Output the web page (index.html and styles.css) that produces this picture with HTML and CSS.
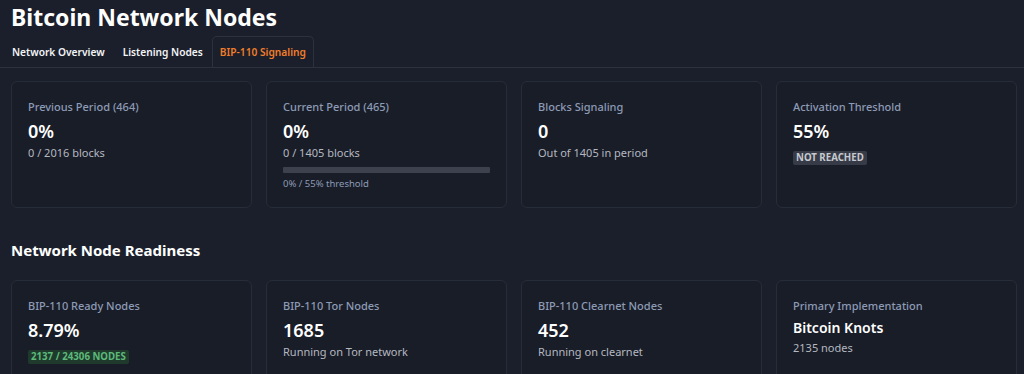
FILE: index.html
```html
<!DOCTYPE html>
<html lang="en">
<head>
  <meta charset="UTF-8" />
  <meta name="viewport" content="width=device-width, initial-scale=1.0"/>
  <title>Bitcoin Network Nodes</title>
  <link rel="stylesheet" href="styles.css">
</head>
<body>
  <div class="page">
    <h1>Bitcoin Network Nodes</h1>

    <nav class="tabs">
      <a class="tab">Network Overview</a>
      <a class="tab">Listening Nodes</a>
      <a class="tab active">BIP-110 Signaling</a>
    </nav>

    <div class="grid">
      <div class="card">
        <div class="label">Previous Period (464)</div>
        <div class="value">0%</div>
        <div class="sub">0 / 2016 blocks</div>
      </div>
      <div class="card">
        <div class="label">Current Period (465)</div>
        <div class="value">0%</div>
        <div class="sub">0 / 1405 blocks</div>
        <div class="progress"><div class="progress-fill" style="width: 0%"></div></div>
        <div class="note">0% / 55% threshold</div>
      </div>
      <div class="card">
        <div class="label">Blocks Signaling</div>
        <div class="value">0</div>
        <div class="sub">Out of 1405 in period</div>
      </div>
      <div class="card">
        <div class="label">Activation Threshold</div>
        <div class="value">55%</div>
        <span class="badge">NOT REACHED</span>
      </div>
    </div>

    <h2>Network Node Readiness</h2>

    <div class="grid readiness">
      <div class="card">
        <div class="label">BIP-110 Ready Nodes</div>
        <div class="value">8.79%</div>
        <span class="badge green">2137 / 24306 NODES</span>
      </div>
      <div class="card">
        <div class="label">BIP-110 Tor Nodes</div>
        <div class="value">1685</div>
        <div class="sub">Running on Tor network</div>
      </div>
      <div class="card">
        <div class="label">BIP-110 Clearnet Nodes</div>
        <div class="value">452</div>
        <div class="sub">Running on clearnet</div>
      </div>
      <div class="card">
        <div class="label">Primary Implementation</div>
        <div class="value small">Bitcoin Knots</div>
        <div class="sub">2135 nodes</div>
      </div>
    </div>
  </div>
</body>
</html>
```

FILE: styles.css
```css
* {
  box-sizing: border-box;
  font-family: 'Noto Sans', 'Open Sans', sans-serif;
}

body {
  margin: 0;
  background: #1b1f2b;
  color: #e6e8ec;
}

.page {
  padding: 0 7px 0 11px;
}

h1 {
  margin: 0;
  padding-top: 2px;
  font-size: 23px;
  font-weight: 700;
  line-height: 30px;
  color: #ffffff;
}

.tabs {
  display: flex;
  margin: 4px -7px 0 -11px;
  padding: 0 3px;
  border-bottom: 1px solid #2c3140;
}

.tab {
  padding: 6px 8px;
  font-size: 10.2px;
  font-weight: 600;
  line-height: 18px;
  color: #f2f4f7;
  border: 1px solid transparent;
  border-bottom: none;
}

.tab.active {
  padding: 6px 7px;
  color: #f07d2a;
  border-color: #2c3140;
  border-radius: 5px 5px 0 0;
}

.grid {
  display: grid;
  grid-template-columns: repeat(4, 1fr);
  gap: 14px;
  margin-top: 13px;
}

.grid.readiness {
  margin-top: 20px;
}

.card {
  background: #191d28;
  border: 1px solid #272c39;
  border-radius: 6px;
  padding: 16px;
  height: 127px;
}

.label {
  font-size: 11px;
  font-weight: 500;
  color: #8d9bb5;
  line-height: 18px;
}

.value {
  font-size: 18px;
  font-weight: 600;
  color: #ffffff;
  line-height: 26px;
  margin-top: 2px;
}

.value.small {
  font-size: 14px;
  line-height: 22px;
}

.sub {
  font-size: 11px;
  color: #b4b8c0;
  line-height: 18px;
}

.progress {
  margin-top: 5px;
  height: 6px;
  background: #3d414d;
  border-radius: 1px;
}

.progress-fill {
  height: 100%;
  background: #f07d2a;
}

.note {
  margin-top: 4px;
  font-size: 9.5px;
  color: #8d9bb5;
  line-height: 14px;
}

.badge {
  display: inline-block;
  margin-top: 2px;
  padding: 0 3px;
  font-size: 9.7px;
  font-weight: 700;
  line-height: 14px;
  color: #c6c9cf;
  background: #373b47;
  border-radius: 2px;
}

.badge.green {
  color: #5cb97a;
  background: #1f3a2d;
}

h2 {
  margin: 32px 0 0;
  font-size: 15px;
  font-weight: 700;
  line-height: 20px;
  color: #ffffff;
}
```
